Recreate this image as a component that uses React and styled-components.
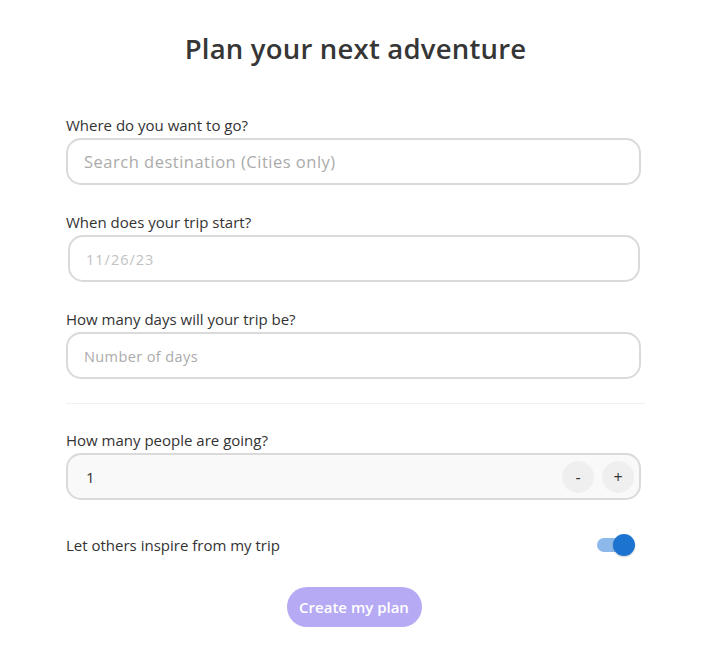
import React, { useState } from 'react'
import styled, { createGlobalStyle } from 'styled-components'

const GlobalStyle = createGlobalStyle`
    body {
    margin: 0;
    background: #ffffff;
    font-family: "Open Sans", Lato, sans-serif;
    color: #333333;
    }
`

const Page = styled.div`
    padding: 33px 0 30px 66px;
    width: 579px;
`

const Title = styled.h1`
    margin: 0 0 50px;
    font-size: 27.5px;
    line-height: 32px;
    font-weight: 600;
    text-align: center;
    color: #363636;
    letter-spacing: 0.2px;
`

const Field = styled.div`
    display: flex;
    flex-direction: column;
    width: 575px;
    margin-bottom: ${p => p.gap || 27}px;
`

const Label = styled.label`
    font-size: 15px;
    line-height: 20px;
    margin-bottom: 3px;
    color: #333;
`

const TextInput = styled.input`
    box-sizing: border-box;
    height: 47px;
    width: ${p => p.narrow ? 'calc(100% - 3px)' : '100%'};
    margin-left: ${p => p.narrow ? '2px' : '0'};
    border: 2px solid #dadada;
    border-radius: 15px;
    padding: 0 16px;
    font-family: inherit;
    font-size: 16px;
    color: #333;
    background: #fff;
    outline: none;

    &::placeholder {
    color: ${p => p.light ? '#c2c2c2' : '#ababab'};
    font-size: ${p => p.small ? '14.5px' : '16.5px'};
    letter-spacing: ${p => p.spacing || 0.5}px;
    }
`

const Divider = styled.hr`
    border: none;
    border-top: 1px solid #f0f0f0;
    margin: 0 0 26px;
    width: 579px;
`

const StepperBox = styled.div`
    box-sizing: border-box;
    display: flex;
    align-items: center;
    height: 47px;
    border: 2px solid #dadada;
    border-radius: 15px;
    padding: 0 5px 0 18px;
    background: #f9f9f9;
`

const Count = styled.span`
    flex: 1;
    font-size: 15px;
    color: #333;
`

const StepButton = styled.button`
    width: 32px;
    height: 32px;
    border-radius: 50%;
    border: none;
    background: #efefef;
    color: #333;
    font-family: inherit;
    font-size: 16px;
    margin-left: 8px;
    display: flex;
    align-items: center;
    justify-content: center;
    cursor: pointer;
    padding: 0;
`

const ToggleRow = styled.div`
    display: flex;
    align-items: center;
    justify-content: space-between;
    width: 575px;
    height: 24px;
    margin: 33px 0 30px;
    font-size: 15px;
`

const Track = styled.div`
    position: relative;
    width: 30px;
    height: 14px;
    border-radius: 7px;
    background: ${p => p.on ? '#8db8ea' : '#c8c8c8'};
    margin-right: 14px;
    cursor: pointer;
`

const Knob = styled.div`
    position: absolute;
    top: -4px;
    left: ${p => p.on ? '16px' : '-4px'};
    width: 22px;
    height: 22px;
    border-radius: 50%;
    background: ${p => p.on ? '#1d74d0' : '#f5f5f5'};
    box-shadow: 0 1px 2px rgba(0,0,0,0.2);
`

const Actions = styled.div`
    display: flex;
    justify-content: center;
    width: 575px;
`

const SubmitButton = styled.button`
    width: 135px;
    height: 40px;
    border: none;
    border-radius: 20px;
    background: #b6aaf5;
    color: #fff;
    font-family: inherit;
    font-size: 15px;
    font-weight: 600;
    cursor: pointer;
    margin-left: 1px;
`

export default function App() {
    const [people, setPeople] = useState(1)
    const [shared, setShared] = useState(true)

    return (
        <Page>
            <GlobalStyle />
            <Title>Plan your next adventure</Title>

            <Field>
                <Label>Where do you want to go?</Label>
                <TextInput placeholder="Search destination (Cities only)" />
            </Field>

            <Field>
                <Label>When does your trip start?</Label>
                <TextInput narrow light small spacing={1} placeholder="11/26/23" />
            </Field>

            <Field gap={24}>
                <Label>How many days will your trip be?</Label>
                <TextInput small spacing={0.4} placeholder="Number of days" />
            </Field>

            <Divider />

            <Field gap={0}>
                <Label>How many people are going?</Label>
                <StepperBox>
                    <Count>{people}</Count>
                    <StepButton onClick={() => setPeople(Math.max(1, people - 1))}>-</StepButton>
                    <StepButton onClick={() => setPeople(people + 1)}>+</StepButton>
                </StepperBox>
            </Field>

            <ToggleRow>
                <span>Let others inspire from my trip</span>
                <Track on={shared} onClick={() => setShared(!shared)}>
                    <Knob on={shared} />
                </Track>
            </ToggleRow>

            <Actions>
                <SubmitButton>Create my plan</SubmitButton>
            </Actions>
        </Page>
    )
}
